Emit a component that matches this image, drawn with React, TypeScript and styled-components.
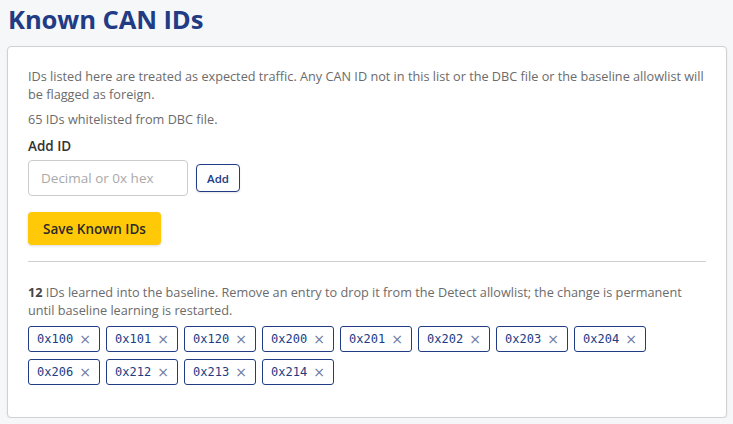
import React from 'react'
import styled, { createGlobalStyle } from 'styled-components'

const GlobalStyle = createGlobalStyle`
    body {
        margin: 0;
        background: #f6f7f9;
        font-family: 'Open Sans', 'Noto Sans', sans-serif;
        color: #333;
    }
`

const knownIds = ['0x100', '0x101', '0x120', '0x200', '0x201', '0x202', '0x203', '0x204', '0x206', '0x212', '0x213', '0x214']

export default function App() {
    return (
        <>
            <GlobalStyle />
            <Page>
                <Title>Known CAN IDs</Title>
                <Card>
                    <Note>
                        IDs listed here are treated as expected traffic. Any CAN ID not in this list or the DBC file or the
                        baseline allowlist will be flagged as foreign.
                    </Note>
                    <Note>65 IDs whitelisted from DBC file.</Note>
                    <Label>Add ID</Label>
                    <AddRow>
                        <IdInput placeholder="Decimal or 0x hex" />
                        <AddButton>Add</AddButton>
                    </AddRow>
                    <SaveButton>Save Known IDs</SaveButton>
                    <Divider />
                    <Note>
                        <strong>12</strong> IDs learned into the baseline. Remove an entry to drop it from the Detect
                        allowlist; the change is permanent until baseline learning is restarted.
                    </Note>
                    <ChipList>
                        {knownIds.map((id) => (
                            <Chip key={id}>
                                <span>{id}</span>
                                <RemoveMark>×</RemoveMark>
                            </Chip>
                        ))}
                    </ChipList>
                </Card>
            </Page>
        </>
    )
}

const Page = styled.div`
    padding: 0 6px 0 7px;
`

const Title = styled.h1`
    margin: 0;
    padding: 2px 0 0 1px;
    height: 44px;
    font-size: 25.6px;
    font-weight: 700;
    color: #213c84;
    letter-spacing: -0.1px;
`

const Card = styled.div`
    background: #fff;
    border: 1px solid #cfd1d4;
    border-radius: 4px;
    box-shadow: 0 1px 2px rgba(0, 0, 0, 0.08);
    padding: 20px 20px 33px 20px;
    height: 372px;
    box-sizing: border-box;
`

const Note = styled.p`
    margin: 0 0 7px;
    font-size: 12.7px;
    line-height: 18px;
    color: #6b6b6b;

    strong {
        color: #444;
        font-weight: 700;
    }
`

const Label = styled.div`
    margin-top: 9px;
    font-size: 13.5px;
    font-weight: 600;
    color: #333;
`

const AddRow = styled.div`
    display: flex;
    align-items: center;
    gap: 8px;
    margin-top: 5px;
`

const IdInput = styled.input`
    width: 160px;
    height: 36px;
    box-sizing: border-box;
    border: 1px solid #ccc;
    border-radius: 4px;
    padding: 0 12px;
    font-family: inherit;
    font-size: 13.5px;

    &::placeholder {
        color: #a9a9a9;
    }
`

const AddButton = styled.button`
    width: 44px;
    height: 28px;
    border: 1px solid #213c84;
    border-radius: 4px;
    background: #fff;
    color: #213c84;
    font-family: inherit;
    font-size: 11.5px;
    font-weight: 600;
    box-shadow: 0 1px 2px rgba(0, 0, 0, 0.1);
`

const SaveButton = styled.button`
    display: block;
    margin-top: 16px;
    width: 133px;
    height: 33px;
    border: none;
    border-radius: 4px;
    background: #ffc907;
    color: #2a2a2a;
    font-family: inherit;
    font-size: 13.5px;
    font-weight: 600;
    box-shadow: 0 1px 3px rgba(0, 0, 0, 0.15);
`

const Divider = styled.hr`
    margin: 16px 0 21px;
    border: none;
    border-top: 1px solid #cfcfcf;
`

const ChipList = styled.div`
    display: flex;
    flex-wrap: wrap;
    gap: 7px 6px;
    margin-top: 3px;
`

const Chip = styled.div`
    display: flex;
    align-items: center;
    gap: 6px;
    width: 72px;
    height: 26px;
    box-sizing: border-box;
    padding: 0 8px;
    border: 1px solid #213c84;
    border-radius: 3px;
    font-family: 'DejaVu Sans Mono', monospace;
    font-size: 12px;
    color: #213c84;
`

const RemoveMark = styled.span`
    font-family: 'DejaVu Sans', sans-serif;
    font-size: 14px;
    color: #6e7aa0;
`
